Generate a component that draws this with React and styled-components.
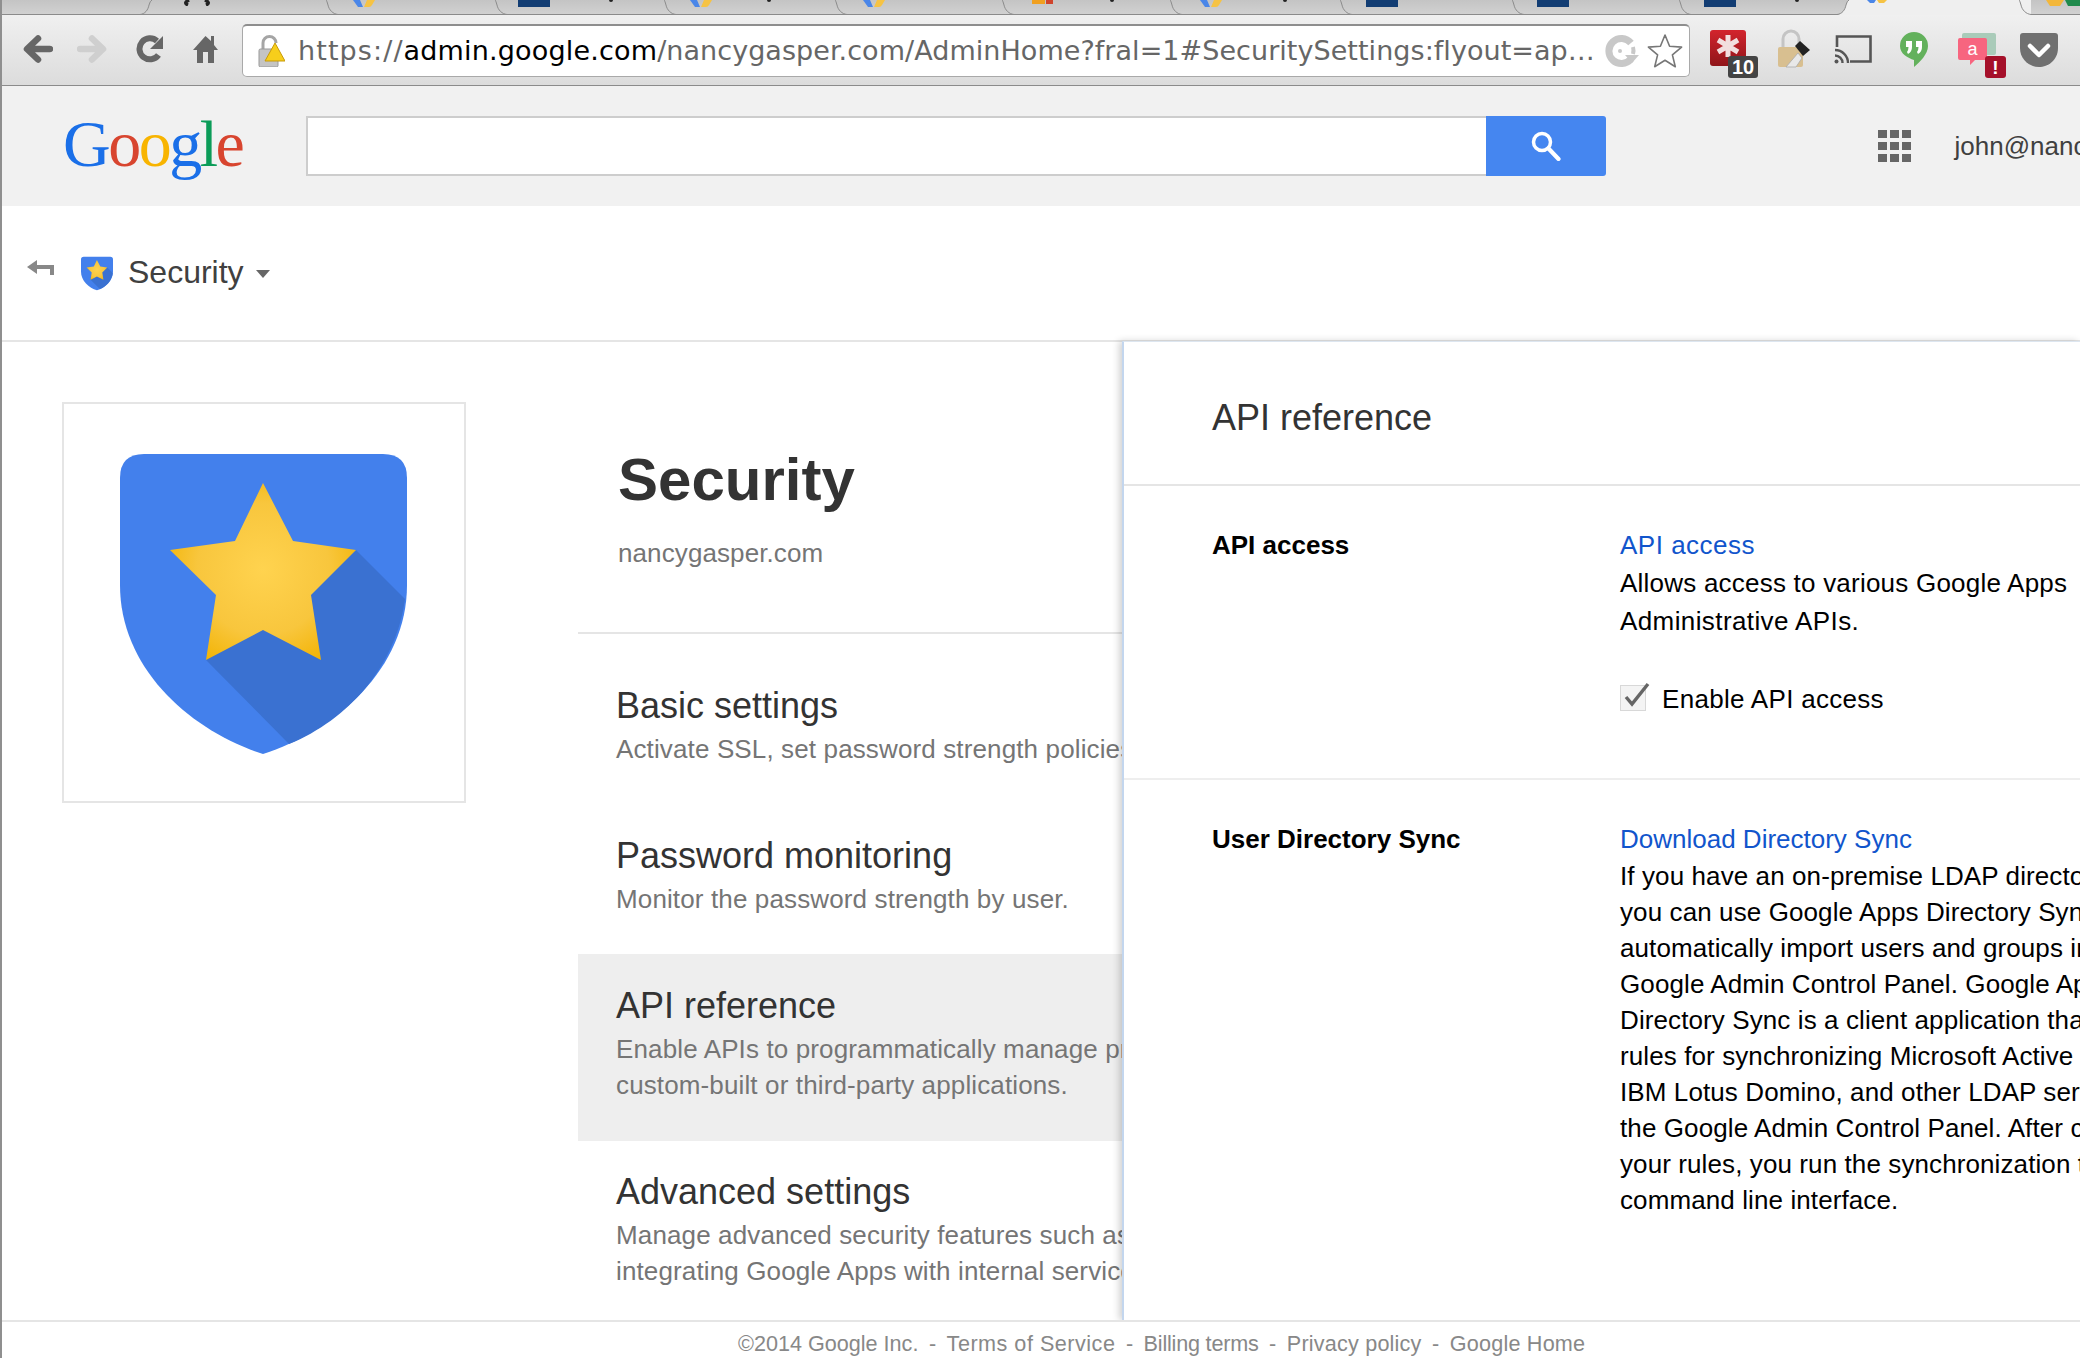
import React from "react";
import styled, { createGlobalStyle } from "styled-components";

const SANS = '"Liberation Sans", Arial, sans-serif';

const Global = createGlobalStyle`
  html, body { margin: 0; padding: 0; background: #fff; overflow: hidden; }
  * { box-sizing: border-box; }
`;

const Page = styled.div`
  width: 2080px;
  height: 1358px;
  overflow: hidden;
  display: flex;
  flex-direction: column;
  background: #fff;
  border-left: 2px solid #8f8f8f;
  font-family: ${SANS};
`;

/* ---------- browser chrome ---------- */
const TabStrip = styled.div`
  height: 15px;
  flex: none;
  display: flex;
  overflow: hidden;
  background: linear-gradient(#c4c4c4, #d2d2d2);
`;
const Tab = styled.div`
  flex: none;
  width: ${(p) => p.$w}px;
  height: 15px;
  display: flex;
  align-items: flex-start;
  background: ${(p) => (p.$active ? "#efefef" : "transparent")};
  border-bottom: ${(p) => (p.$active ? "none" : "1px solid #8b8b8b")};
`;
const TabIcon = styled.svg`
  flex: none;
  margin-left: ${(p) => p.$inset}px;
`;
const TabTitleMark = styled.span`
  flex: none;
  width: 4px;
  height: 2px;
  margin-left: ${(p) => p.$inset}px;
  border-radius: 0 0 3px 3px;
  background: #222;
`;
const TabCurve = styled.svg`
  flex: none;
  margin-left: auto;
`;
const Toolbar = styled.div`
  height: 71px;
  flex: none;
  display: flex;
  align-items: center;
  padding-left: 19px;
  background: linear-gradient(#f0f0f0, #dcdcdc);
  border-bottom: 1px solid #8b8b8b;
`;
const ToolSvg = styled.svg`
  flex: none;
  margin-left: ${(p) => p.$gap || 0}px;
`;
const Omnibox = styled.div`
  flex: none;
  width: 1448px;
  height: 53px;
  margin-left: 24px;
  display: flex;
  align-items: center;
  padding: 0 6px 0 15px;
  background: #fff;
  border: 1px solid #a9a9a9;
  border-top: 2px solid #8e8e8e;
  border-radius: 5px;
`;
const Url = styled.div`
  flex: 1;
  margin-left: 13px;
  white-space: nowrap;
  overflow: hidden;
  font-family: "DejaVu Sans", sans-serif;
  font-size: 27px;
  line-height: 40px;
  letter-spacing: 0.05px;
  color: #666;
`;
const UrlScheme = styled.span`
  letter-spacing: 1.1px;
`;
const UrlHost = styled.span`
  color: #000;
  letter-spacing: 0.17px;
`;
const Spinner = styled.svg`
  flex: none;
`;
const BookmarkStar = styled.svg`
  flex: none;
  margin-left: 8px;
`;

const Tool = ({ w, gap, children }) => (
  <ToolSvg $gap={gap} width={w} height={60} viewBox={`0 20 ${w} 60`}>
    {children}
  </ToolSvg>
);

/* ---------- app header ---------- */
const AppHeader = styled.header`
  height: 120px;
  flex: none;
  display: flex;
  align-items: center;
  padding-left: 61px;
  background: #f1f1f1;
  white-space: nowrap;
`;
const Logo = styled.div`
  flex: none;
  width: 180px;
  font-family: "Liberation Serif", serif;
  font-size: 66px;
  line-height: 66px;
  letter-spacing: -2.5px;
  margin-top: -4px;
`;
const LogoLetter = styled.span`
  color: ${(p) => p.$c};
`;
const SearchField = styled.div`
  flex: none;
  width: 1180px;
  height: 60px;
  margin-left: 63px;
  background: #fff;
  border: 2px solid #cdcdcd;
  border-right: none;
`;
const SearchButton = styled.button`
  flex: none;
  width: 120px;
  height: 60px;
  padding: 0;
  border: none;
  border-radius: 0 3px 3px 0;
  background: #4586f0;
  display: flex;
  align-items: center;
  justify-content: center;
`;
const AppsGrid = styled.div`
  flex: none;
  margin-left: 272px;
  display: grid;
  grid-template-columns: repeat(3, 8.5px);
  grid-auto-rows: 8px;
  gap: 4px 3.5px;
`;
const AppsDot = styled.span`
  background: #666;
`;
const Account = styled.span`
  margin-left: 44px;
  font-size: 26px;
  color: #404040;
`;

/* ---------- sub header ---------- */
const SubHeader = styled.div`
  height: 136px;
  flex: none;
  display: flex;
  align-items: center;
  padding-left: 25px;
  border-bottom: 2px solid #e5e5e5;
`;
const BackLink = styled.svg`
  flex: none;
  margin-top: -9px;
`;
const SmallShield = styled.div`
  flex: none;
  margin-left: 27px;
  width: 32px;
  height: 35px;
  display: flex;
`;
const Crumb = styled.span`
  margin-left: 15px;
  font-size: 32px;
  color: #404040;
  margin-top: -1px;
`;
const Caret = styled.span`
  margin-left: 12px;
  width: 0;
  height: 0;
  border-left: 7px solid transparent;
  border-right: 7px solid transparent;
  border-top: 8px solid #666;
  margin-top: 2px;
`;

/* ---------- main ---------- */
const Main = styled.main`
  flex: 1;
  min-height: 0;
  display: flex;
`;
const CardColumn = styled.div`
  flex: none;
  width: 576px;
  padding: 60px 0 0 60px;
`;
const Card = styled.div`
  width: 404px;
  height: 401px;
  border: 2px solid #e5e5e5;
  display: grid;
  place-items: center;
`;
const BigShield = styled.div`
  display: flex;
  margin: 2px 2px 0 0;
`;
const ListColumn = styled.div`
  flex: none;
  width: 544px;
  overflow: hidden;
  white-space: nowrap;
`;
const Heading = styled.div`
  padding: 103px 0 61px 40px;
  border-bottom: 2px solid #e5e5e5;
  margin-bottom: 21px;
`;
const Title = styled.h1`
  margin: 0 0 20px;
  font-size: 60px;
  line-height: 70px;
  font-weight: 700;
  color: #333;
`;
const Domain = styled.div`
  font-size: 26px;
  line-height: 36px;
  letter-spacing: 0.1px;
  color: #757575;
`;
const Item = styled.div`
  padding: 31px 0 37.5px 38px;
  background: ${(p) => (p.$selected ? "#eee" : "transparent")};
  ${(p) => (p.$selected ? "padding-top: 32px;" : "")}
`;
const ItemTitle = styled.div`
  font-size: 36px;
  line-height: 40px;
  color: #333;
  margin-bottom: 5px;
`;
const ItemText = styled.div`
  font-size: 26px;
  line-height: 36px;
  letter-spacing: 0.13px;
  color: #757575;
`;

const Panel = styled.section`
  flex: none;
  width: 958px;
  position: relative;
  z-index: 1;
  border-left: 2px solid #c3d6ee;
  border-top: 1px solid #dde6f0;
  margin-top: -1px;
  background: #fff;
  box-shadow: -3px 0 7px rgba(0, 0, 0, 0.18);
  white-space: nowrap;
  color: #000;
`;
const PanelHead = styled.div`
  padding: 56px 0 46px 88px;
  font-size: 36px;
  line-height: 40px;
  color: #333;
  border-bottom: 2px solid #e5e5e5;
`;
const Section = styled.div`
  display: grid;
  grid-template-columns: 408px 1fr;
  padding: ${(p) => p.$top}px 0 ${(p) => p.$bottom}px 88px;
  border-bottom: ${(p) => (p.$last ? "none" : "2px solid #eee")};
  font-size: 26px;
`;
const Label = styled.div`
  font-weight: 700;
  line-height: ${(p) => p.$lh}px;
`;
const Link = styled.a`
  display: block;
  color: #15c;
  line-height: ${(p) => p.$lh}px;
  letter-spacing: ${(p) => p.$ls || 0}px;
`;
const Line = styled.div`
  line-height: ${(p) => p.$lh}px;
  letter-spacing: ${(p) => p.$ls || 0}px;
`;
const CheckRow = styled.label`
  display: flex;
  align-items: center;
  margin-top: 40px;
  line-height: 38px;
  letter-spacing: 0.3px;
`;
const CheckIcon = styled.svg`
  flex: none;
  margin: -4px 12px 0 0;
`;
const Footer = styled.footer`
  height: 38px;
  flex: none;
  position: relative;
  z-index: 2;
  background: #fff;
  border-top: 2px solid #e5e5e5;
  padding: 9px 0 0 736px;
  display: flex;
  gap: 10.5px;
  font-size: 21.6px;
  line-height: 26px;
  color: #888;
  white-space: nowrap;
`;
const FootItem = styled.span`
  letter-spacing: ${(p) => p.$ls || 0}px;
`;

/* ---------- drawings ---------- */
const ShieldMark = ({ id, width, height }) => (
  <svg width={width} height={height} viewBox="0 0 287 300">
    <defs>
      <radialGradient id={id} cx="143" cy="115" r="110" gradientUnits="userSpaceOnUse">
        <stop offset="0" stopColor="#ffd34f" />
        <stop offset="0.6" stopColor="#f8c63d" />
        <stop offset="1" stopColor="#f2b200" />
      </radialGradient>
    </defs>
    <path
      d="M24 0H263Q287 0 287 24V131C287 215 215 277 143 300C71 277 0 215 0 131V24Q0 0 24 0Z"
      fill="#4380ec"
    />
    <path d="M236 96L285 145C276 212 228 266 169 290L86 206L143 130Z" fill="#3a71d1" />
    <path
      d="M143 29L173 87L236 96L191 141L201 206L143 176L86 206L96 141L50 96L115 87Z"
      fill={`url(#${id})`}
    />
  </svg>
);

const TABS = [
  { w: 150, lean: "/" },
  { w: 186, icon: "braces", inset: 31, lean: "\\" },
  { w: 169, icon: "g", inset: 15, lean: "\\" },
  { w: 169, icon: "navy", inset: 11, mark: 59, lean: "\\" },
  { w: 171, icon: "g", inset: 14, mark: 55, lean: "\\" },
  { w: 167, icon: "g", inset: 16, lean: "\\" },
  { w: 168, icon: "orange", inset: 18, mark: 57, lean: "\\" },
  { w: 170, icon: "g", inset: 18, mark: 61, lean: "\\" },
  { w: 172, icon: "navy", inset: 14, lean: "\\" },
  { w: 167, icon: "navy", inset: 13, lean: "\\" },
  { w: 158, icon: "navy", inset: 13, mark: 59, lean: "/", next: "#efefef" },
  { w: 182, icon: "active", inset: 18, active: true, lean: "\\", fill: "#efefef" },
  { w: 49, icon: "last", inset: 15 },
];

const Favicon = ({ kind, inset }) => {
  if (kind === "braces")
    return (
      <TabIcon $inset={inset} width="28" height="6" viewBox="0 0 28 6">
        <path d="M6 0Q0 3 5 5M22 0Q28 3 23 5" fill="none" stroke="#222" strokeWidth="3.5" />
      </TabIcon>
    );
  if (kind === "g")
    return (
      <TabIcon $inset={inset} width="22" height="8" viewBox="0 0 22 8">
        <path d="M0 0H7L10 7H5Z" fill="#4a86e8" />
        <path d="M11 7L14 0H22L19 5Q18 7 16 7Z" fill="#f6c344" />
      </TabIcon>
    );
  if (kind === "navy")
    return (
      <TabIcon $inset={inset} width="32" height="7" viewBox="0 0 32 7">
        <rect width="32" height="7" fill="#123d73" />
      </TabIcon>
    );
  if (kind === "orange")
    return (
      <TabIcon $inset={inset} width="21" height="4" viewBox="0 0 21 4">
        <rect width="13" height="4" fill="#f0a020" />
        <rect x="14" width="7" height="4" fill="#d0442c" />
      </TabIcon>
    );
  if (kind === "active")
    return (
      <TabIcon $inset={inset} width="20" height="4" viewBox="0 0 20 4">
        <path d="M0 0H9L7 3H3Z" fill="#4a86e8" />
        <path d="M10 0H20L17 3H12Z" fill="#f6c344" />
      </TabIcon>
    );
  if (kind === "last")
    return (
      <TabIcon $inset={inset} width="34" height="6" viewBox="0 0 34 6">
        <path d="M0 0H18L14 6H4Z" fill="#f3b73a" />
        <path d="M19 0H34V6H22Z" fill="#1f8a4c" />
      </TabIcon>
    );
  return null;
};

const Curve = ({ lean, fill, next }) => (
  <TabCurve width="12" height="15" viewBox="0 0 12 15">
    {lean === "/" ? (
      <>
        {next && <path d="M12 0V15H0C5 14 8 10 9 5Q10 1 12 0Z" fill={next} />}
        <path d="M12 0Q10 1 9 5C8 10 5 14 0 14.5" fill="none" stroke="#8b8b8b" />
      </>
    ) : (
      <>
        {fill && <path d="M0 0H2C3 8 7 14 12 15H0Z" fill={fill} />}
        <path d="M0 0Q1 1 2 5C3 10 7 14 12 14.5" fill="none" stroke="#8b8b8b" />
      </>
    )}
  </TabCurve>
);

const SYNC_LINES = [
  "If you have an on-premise LDAP directory server,",
  "you can use Google Apps Directory Sync to",
  "automatically import users and groups into the",
  "Google Admin Control Panel. Google Apps",
  "Directory Sync is a client application that uses",
  "rules for synchronizing Microsoft Active Directory,",
  "IBM Lotus Domino, and other LDAP servers with",
  "the Google Admin Control Panel. After configuring",
  "your rules, you run the synchronization through a",
  "command line interface.",
];

const ITEMS = [
  { title: "Basic settings", lines: ["Activate SSL, set password strength policies and more."] },
  { title: "Password monitoring", lines: ["Monitor the password strength by user."] },
  {
    title: "API reference",
    selected: true,
    lines: [
      "Enable APIs to programmatically manage provisioning,",
      "custom-built or third-party applications.",
    ],
  },
  {
    title: "Advanced settings",
    lines: [
      "Manage advanced security features such as",
      "integrating Google Apps with internal services.",
    ],
  },
];

const LOGO = [
  ["G", "#1a6fe8"],
  ["o", "#d8452f"],
  ["o", "#f8b400"],
  ["g", "#1a6fe8"],
  ["l", "#0b9c58"],
  ["e", "#d8452f"],
];

const FOOT = [
  { t: "©2014 Google Inc." },
  { t: "-" },
  { t: "Terms of Service", ls: 0.5 },
  { t: "-" },
  { t: "Billing terms", ls: -0.2 },
  { t: "-" },
  { t: "Privacy policy", ls: 0.2 },
  { t: "-" },
  { t: "Google Home", ls: 0.2 },
];

export default function App() {
  return (
    <Page>
      <Global />
      <TabStrip>
        {TABS.map((t, i) => (
          <Tab key={i} $w={t.w} $active={t.active}>
            {t.icon && <Favicon kind={t.icon} inset={t.inset} />}
            {t.mark && <TabTitleMark $inset={t.mark} />}
            {t.lean && <Curve lean={t.lean} fill={t.fill} next={t.next} />}
          </Tab>
        ))}
      </TabStrip>

      <Toolbar>
        <Tool w={32}>
          <path d="M29 49H7M17 38.5L6 49L17 59.5" fill="none" stroke="#666" strokeWidth="6.5" strokeLinecap="round" strokeLinejoin="round" />
        </Tool>
        <Tool w={31} gap={24}>
          <path d="M3 49H25M15 38.5L26 49L15 59.5" fill="none" stroke="#cfcfcf" strokeWidth="6.5" strokeLinecap="round" strokeLinejoin="round" />
        </Tool>
        <Tool w={27} gap={28}>
          <path d="M21 41A10.5 10.5 0 1 0 22.5 55" fill="none" stroke="#666" strokeWidth="6" />
          <path d="M27 36V49H14Z" fill="#666" />
        </Tool>
        <Tool w={25} gap={30}>
          <path d="M12.5 36L0 50H4V63H10V52H15V63H21V50H25L21 45V36H18V41Z" fill="#666" />
        </Tool>
        <Omnibox>
          <svg width="27" height="32" viewBox="0 0 27 32">
            <path d="M5 15V8a6.5 6.5 0 0 1 13 0V8" fill="none" stroke="#a5a5a5" strokeWidth="3" />
            <rect x="1" y="14" width="19" height="18" rx="1.5" fill="#c4c4c4" stroke="#999" />
            <path d="M17 8L27 26H7Z" fill="#f7ce1b" stroke="#c79a08" strokeWidth="1" strokeLinejoin="round" />
          </svg>
          <Url>
            <UrlScheme>https://</UrlScheme><UrlHost>admin.google.com</UrlHost>/nancygasper.com/AdminHome?fral=1#SecuritySettings:flyout=ap…
          </Url>
          <Spinner width="36" height="34" viewBox="0 0 36 34">
            <path d="M28 25A12.5 12.5 0 1 1 28 9" fill="none" stroke="#c8c8c8" strokeWidth="7" />
            <path d="M30 13A12.5 12.5 0 0 1 30 20" fill="none" stroke="#c8c8c8" strokeWidth="4" />
            <path d="M22 21H36L29 29Z" fill="#c8c8c8" />
            <circle cx="17" cy="17" r="2" fill="#c8c8c8" />
          </Spinner>
          <BookmarkStar width="36" height="36" viewBox="0 0 36 36">
            <path d="M18 2L22.6 13.2L34.6 14.1L25.4 21.9L28.3 33.7L18 27.3L7.7 33.7L10.6 21.9L1.4 14.1L13.4 13.2Z" fill="#fff" stroke="#777" strokeWidth="1.6" strokeLinejoin="round" />
          </BookmarkStar>
        </Omnibox>

        <Tool w={48} gap={20}>
          <defs>
            <linearGradient id="lp" x1="0" y1="0" x2="0" y2="1">
              <stop offset="0" stopColor="#d3242d" />
              <stop offset="1" stopColor="#8f1519" />
            </linearGradient>
          </defs>
          <rect x="0" y="30" width="36" height="36" rx="3" fill="url(#lp)" />
          <path d="M18 35V57M8 40L28 52M28 40L8 52" stroke="#f2dede" strokeWidth="5" />
          <rect x="18" y="56" width="30" height="22" rx="3" fill="#444" />
          <text x="33" y="74" textAnchor="middle" fontFamily={SANS} fontSize="20" fontWeight="700" fill="#fff">10</text>
        </Tool>
        <Tool w={34} gap={18}>
          <path d="M7 50V39a8 8 0 0 1 16 0V46" fill="none" stroke="#c4c4c4" strokeWidth="3" />
          <rect x="2" y="47" width="25" height="20" rx="2" fill="#d8bf90" />
          <path d="M34 50L24 41L19 46L27 56Z" fill="#222" />
          <path d="M22 53L10 67H20L26 58Z" fill="#e8e8e8" stroke="#aaa" strokeWidth="0.8" />
        </Tool>
        <Tool w={38} gap={24}>
          <path d="M3 47V36.5H36.5V61.5H16" fill="none" stroke="#555" strokeWidth="2.6" />
          <path d="M1 50A13 13 0 0 1 14 63M1 55.5A7.5 7.5 0 0 1 8.5 63" fill="none" stroke="#555" strokeWidth="2.4" />
          <circle cx="2.5" cy="61.5" r="2" fill="#555" />
        </Tool>
        <Tool w={28} gap={28}>
          <path d="M14 32A14 14 0 0 0 0 46C0 54 8 58 14 60V67C20 62 28 54 28 46A14 14 0 0 0 14 32Z" fill="#63b15c" />
          <path d="M6 41H12V47Q12 52 8 54L7 52Q8.5 50 8.5 47H6ZM16 41H22V47Q22 52 18 54L17 52Q18.5 50 18.5 47H16Z" fill="#fff" />
        </Tool>
        <Tool w={48} gap={30}>
          <rect x="4" y="33" width="34" height="22" rx="2" fill="#a9cbb9" />
          <path d="M2 38H27Q29 38 29 40V58Q29 60 27 60H17L12 65V60H2Q0 60 0 58V40Q0 38 2 38Z" fill="#f7657f" />
          <text x="14.5" y="55" textAnchor="middle" fontFamily={SANS} fontSize="18" fill="#fff">a</text>
          <rect x="27" y="56" width="21" height="22" rx="3" fill="#a5102a" />
          <text x="37.5" y="74" textAnchor="middle" fontFamily={SANS} fontSize="19" fontWeight="700" fill="#fff">!</text>
        </Tool>
        <Tool w={38} gap={14}>
          <path d="M0 36Q0 33 3 33H35Q38 33 38 36V48C38 60 28 67 19 67C10 67 0 60 0 48Z" fill="#707070" />
          <path d="M10 46L19 55L28 46" fill="none" stroke="#fff" strokeWidth="4.5" strokeLinecap="round" strokeLinejoin="round" />
        </Tool>
      </Toolbar>

      <AppHeader>
        <Logo>
          {LOGO.map(([l, c], i) => (
            <LogoLetter key={i} $c={c}>{l}</LogoLetter>
          ))}
        </Logo>
        <SearchField />
        <SearchButton aria-label="Search">
          <svg width="30" height="30" viewBox="0 0 30 30">
            <circle cx="11" cy="11" r="8.5" fill="none" stroke="#fff" strokeWidth="3.5" />
            <path d="M17.5 17.5L27.5 28" stroke="#fff" strokeWidth="4.2" strokeLinecap="round" />
          </svg>
        </SearchButton>
        <AppsGrid>
          {Array.from({ length: 9 }, (_, i) => (
            <AppsDot key={i} />
          ))}
        </AppsGrid>
        <Account>john@nancygasper.com</Account>
      </AppHeader>

      <SubHeader>
        <BackLink width="27" height="19" viewBox="0 0 27 19">
          <path d="M0 8L10 1V15Z" fill="#888" />
          <path d="M8 8H25V16" fill="none" stroke="#888" strokeWidth="4" />
        </BackLink>
        <SmallShield>
          <ShieldMark id="starSmall" width={32} height={35} />
        </SmallShield>
        <Crumb>Security</Crumb>
        <Caret />
      </SubHeader>

      <Main>
        <CardColumn>
          <Card>
            <BigShield>
              <ShieldMark id="starBig" width={287} height={300} />
            </BigShield>
          </Card>
        </CardColumn>
        <ListColumn>
          <Heading>
            <Title>Security</Title>
            <Domain>nancygasper.com</Domain>
          </Heading>
          {ITEMS.map((it) => (
            <Item key={it.title} $selected={it.selected}>
              <ItemTitle>{it.title}</ItemTitle>
              {it.lines.map((l) => (
                <ItemText key={l}>{l}</ItemText>
              ))}
            </Item>
          ))}
        </ListColumn>
        <Panel>
          <PanelHead>API reference</PanelHead>
          <Section $top={40} $bottom={60}>
            <Label $lh={38}>API access</Label>
            <div>
              <Link $lh={38} $ls={0.5}>API access</Link>
              <Line $lh={38} $ls={0.22}>Allows access to various Google Apps</Line>
              <Line $lh={38} $ls={0.4}>Administrative APIs.</Line>
              <CheckRow>
                <CheckIcon width="30" height="30" viewBox="0 0 30 30">
                  <rect x="0.5" y="3.5" width="25" height="25" fill="#f4f4f4" stroke="#d8d8d8" />
                  <path d="M6 15L12 22L28 2" fill="none" stroke="#666" strokeWidth="3.4" />
                </CheckIcon>
                Enable API access
              </CheckRow>
            </div>
          </Section>
          <Section $top={41} $bottom={0} $last>
            <Label $lh={37}>User Directory Sync</Label>
            <div>
              <Link $lh={37}>Download Directory Sync</Link>
              {SYNC_LINES.map((l) => (
                <Line key={l} $lh={36} $ls={0.1}>{l}</Line>
              ))}
            </div>
          </Section>
        </Panel>
      </Main>

      <Footer>
        {FOOT.map((f, i) => (
          <FootItem key={i} $ls={f.ls}>{f.t}</FootItem>
        ))}
      </Footer>
    </Page>
  );
}
